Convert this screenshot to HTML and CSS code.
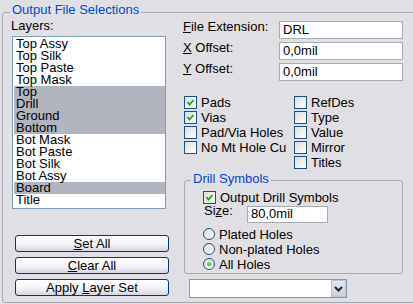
FILE: index.html
```html
<!DOCTYPE html>
<html lang="en">
<head>
  <meta charset="UTF-8">
  <title>Output File Selections</title>
  <link rel="stylesheet" href="styles.css">
</head>
<body>
  <div class="panel">
    <div class="panel-title">Output File Selections</div>
    <div class="columns">
      <div class="left-col">
        <div class="layers-label">Layers:</div>
        <ul class="layer-list">
          <li>Top Assy</li>
          <li>Top Silk</li>
          <li>Top Paste</li>
          <li>Top Mask</li>
          <li class="sel">Top</li>
          <li class="sel">Drill</li>
          <li class="sel">Ground</li>
          <li class="sel">Bottom</li>
          <li>Bot Mask</li>
          <li>Bot Paste</li>
          <li>Bot Silk</li>
          <li>Bot Assy</li>
          <li class="sel">Board</li>
          <li>Title</li>
        </ul>
        <div class="buttons">
          <button class="btn"><u>S</u>et All</button>
          <button class="btn"><u>C</u>lear All</button>
          <button class="btn">Apply <u>L</u>ayer Set</button>
        </div>
      </div>

      <div class="right-col">
        <div class="field-row">
          <label class="field-label"><u>F</u>ile Extension:</label>
          <input class="field" type="text" value="DRL">
        </div>
        <div class="field-row">
          <label class="field-label"><u>X</u> Offset:</label>
          <input class="field" type="text" value="0,0mil">
        </div>
        <div class="field-row">
          <label class="field-label"><u>Y</u> Offset:</label>
          <input class="field" type="text" value="0,0mil">
        </div>

        <div class="checks">
          <div class="check-col">
            <div class="check"><span class="box on"><svg viewBox="0 0 11 11"><polyline points="2.5,5 4.5,7.5 8.5,3"/></svg></span>Pads</div>
            <div class="check"><span class="box on"><svg viewBox="0 0 11 11"><polyline points="2.5,5 4.5,7.5 8.5,3"/></svg></span>Vias</div>
            <div class="check"><span class="box"></span>Pad/Via Holes</div>
            <div class="check"><span class="box"></span>No Mt Hole Cu</div>
          </div>
          <div class="check-col">
            <div class="check"><span class="box"></span>RefDes</div>
            <div class="check"><span class="box"></span>Type</div>
            <div class="check"><span class="box"></span>Value</div>
            <div class="check"><span class="box"></span>Mirror</div>
            <div class="check"><span class="box"></span>Titles</div>
          </div>
        </div>

        <div class="drill-group">
          <div class="drill-title">Drill Symbols</div>
          <div class="check"><span class="box on"><svg viewBox="0 0 11 11"><polyline points="2.5,5 4.5,7.5 8.5,3"/></svg></span>Output Drill Symbols</div>
          <div class="size-row">
            <label class="size-label">Si<u>z</u>e:</label>
            <input class="field size-field" type="text" value="80,0mil">
          </div>
          <div class="radio"><span class="dot"></span>Plated Holes</div>
          <div class="radio"><span class="dot"></span>Non-plated Holes</div>
          <div class="radio"><span class="dot on"></span>All Holes</div>
        </div>

        <div class="combo">
          <div class="combo-value"></div>
          <div class="combo-arrow"><svg viewBox="0 0 9 6"><polyline points="1,1 4.5,4.5 8,1"/></svg></div>
        </div>
      </div>
    </div>
  </div>
</body>
</html>
```

FILE: styles.css
```css
body {
  margin: 0;
  width: 413px;
  height: 304px;
  overflow: hidden;
  background: #e0dfe3;
  font-family: 'Liberation Sans', Arial, sans-serif;
  font-size: 13px;
  color: #000;
}
u {
  text-decoration: underline;
  text-underline-offset: 1px;
}
.panel {
  margin: 12px 0 0 2px;
  width: 430px;
  height: 291px;
  box-sizing: border-box;
  border: 1px solid #a9a9b2;
  border-radius: 3px;
}
.panel-title {
  margin: -11px 0 0 7px;
  padding: 0 2px;
  width: fit-content;
  background: #e0dfe3;
  color: #0046d5;
  line-height: 16px;
}
.columns {
  display: flex;
  align-items: flex-start;
  margin-top: 2px;
}
.left-col {
  width: 157px;
  margin-left: 8px;
}
.layers-label {
  line-height: 12px;
}
.layer-list {
  list-style: none;
  margin: 4px 0 0 1px;
  padding: 1px 0 2px 1px;
  width: 154px;
  box-sizing: border-box;
  border: 1px solid #7f9db9;
  background: #fff;
}
.layer-list li {
  line-height: 12px;
  padding-left: 2px;
}
.layer-list li.sel {
  background: #b2b4bf;
}
.buttons {
  display: flex;
  flex-direction: column;
  gap: 5px;
  margin: 26px 0 0 4px;
}
.btn {
  width: 154px;
  height: 17px;
  padding: 0;
  font: inherit;
  line-height: 14px;
  color: #000;
  border: 1px solid #003c74;
  border-radius: 3px;
  background: linear-gradient(#ffffff, #f3f3f7 55%, #d5d5e3);
}

.right-col {
  width: 221px;
  margin-left: 15px;
}
.field-row {
  display: flex;
  align-items: flex-start;
  margin-top: 1px;
}
.field-row + .field-row {
  margin-top: 3px;
}
.field-label {
  width: 96px;
  line-height: 10px;
  margin-top: 1px;
}
.field {
  width: 124px;
  height: 18px;
  box-sizing: border-box;
  margin: 0;
  padding: 0 3px 2px;
  border: 1px solid #a5acb2;
  background: #fff;
  font: inherit;
  color: #000;
  outline: none;
}

.checks {
  display: flex;
  margin: 14px 0 0 1px;
}
.check-col {
  width: 122px;
}
.check, .radio {
  display: flex;
  align-items: flex-start;
  height: 15px;
  line-height: 15px;
  white-space: nowrap;
}
.box {
  width: 13px;
  height: 13px;
  box-sizing: border-box;
  margin: 1px 4px 0 0;
  border: 1px solid #1c5180;
  background: linear-gradient(135deg, #dcdcd7, #ffffff);
  flex: none;
}
.box svg {
  display: block;
  width: 11px;
  height: 11px;
}
.box polyline {
  fill: none;
  stroke: #21a121;
  stroke-width: 1.8;
}

.drill-group {
  margin: 10px 0 0 1px;
  width: 219px;
  height: 94px;
  box-sizing: border-box;
  border: 1px solid #aaaab2;
  border-radius: 3px;
  padding-left: 18px;
}
.drill-title {
  margin: -10px 0 0 -12px;
  padding: 0 2px;
  width: fit-content;
  background: #e0dfe3;
  color: #0046d5;
  line-height: 16px;
}
.drill-group .check {
  margin-top: 3px;
}
.size-row {
  display: flex;
  align-items: flex-start;
  margin-top: 1px;
}
.size-label {
  width: 43px;
  margin-left: 1px;
  line-height: 10px;
  margin-top: 0;
}
.size-field {
  width: 81px;
  height: 17px;
}
.size-row + .radio {
  margin-top: 4px;
}
.dot {
  position: relative;
  width: 12px;
  height: 12px;
  box-sizing: border-box;
  margin: 1px 4px 0 0;
  border: 1px solid #1c5180;
  border-radius: 50%;
  background: linear-gradient(135deg, #dcdcd7, #ffffff);
  flex: none;
}
.dot.on::after {
  content: '';
  position: absolute;
  left: 3px;
  top: 3px;
  width: 4px;
  height: 4px;
  border-radius: 50%;
  background: radial-gradient(circle at 35% 35%, #6be36b, #21a121);
}

.combo {
  display: flex;
  margin: 5px 0 0 6px;
  width: 158px;
  height: 19px;
  box-sizing: border-box;
  border: 1px solid #7f9db9;
  background: #fff;
}
.combo-value {
  flex: 1;
}
.combo-arrow {
  width: 15px;
  margin: 0;
  box-sizing: border-box;
  border: 1px solid #b9c4d8;
  background: linear-gradient(#e6e6ec, #cfcfd8);
  display: flex;
  align-items: center;
  justify-content: center;
}
.combo-arrow svg {
  width: 9px;
  height: 6px;
}
.combo-arrow polyline {
  fill: none;
  stroke: #222;
  stroke-width: 2;
}
```
